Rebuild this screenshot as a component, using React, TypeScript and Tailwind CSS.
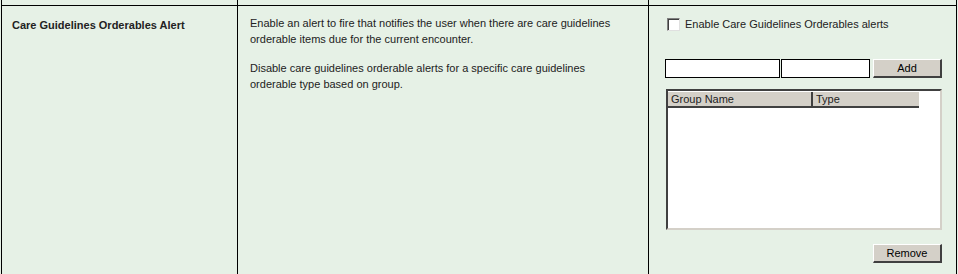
import React from "react";

const font = { fontFamily: '"Liberation Sans", Arial, sans-serif' };

function Btn({ label }: { label: string }) {
  return (
    <div className="w-[69px] h-[19px] bg-[#d4d0c8] border-t border-l border-t-white border-l-white border-r-2 border-b-2 border-r-[#404040] border-b-[#404040] flex items-center justify-center text-[11px] text-black leading-none">
      {label}
    </div>
  );
}

export default function App() {
  return (
    <div className="w-[958px] h-[274px] bg-[#e6f1e6] text-[#111]" style={font}>
      <div className="ml-[1px] w-[956px] border-l border-r border-black">
        <div className="flex h-[5px]">
          <div className="w-[236px] border-r border-black" />
          <div className="w-[411px] border-r border-black" />
          <div className="flex-1" />
        </div>
        <div className="flex h-[269px] border-t border-black">
          <div className="w-[236px] border-r border-black pl-[10px] pt-[12px]">
            <div className="text-[11px] font-bold leading-[14px] text-[#222]">Care Guidelines Orderables Alert</div>
          </div>
          <div className="w-[411px] border-r border-black pl-[12px] pt-[9px] text-[11px] leading-[16px] text-[#222]">
            <p>Enable an alert to fire that notifies the user when there are care guidelines orderable items due for the current encounter.</p>
            <p className="mt-[13px] pr-[40px]">Disable care guidelines orderable alerts for a specific care guidelines orderable type based on group.</p>
          </div>
          <div className="flex-1 pl-[16px] pt-[11px]">
            <div className="flex items-center h-[14px] ml-[2px]">
              <div className="w-[13px] h-[13px] bg-white border-t border-l border-t-[#808080] border-l-[#808080] border-r border-b border-r-[#e0e0e0] border-b-[#e0e0e0] shadow-[inset_1px_1px_0_#404040]" />
              <span className="ml-[5px] text-[11px] text-[#222]">Enable Care Guidelines Orderables alerts</span>
            </div>
            <div className="flex mt-[28px] items-start">
              <div className="w-[115px] h-[19px] bg-white border border-black" />
              <div className="ml-[1px] w-[89px] h-[19px] bg-white border border-black" />
              <div className="ml-[3px]">
                <Btn label="Add" />
              </div>
            </div>
            <div className="mt-[11px] ml-[1px] w-[276px] h-[141px] bg-white border-t-2 border-l-2 border-t-[#404040] border-l-[#404040] border-r-2 border-b-2 border-r-[#d4d0c8] border-b-[#d4d0c8] pt-[1px]">
              <div className="flex h-[16px] text-[11px] leading-[14px] text-[#222]">
                <div className="w-[145px] bg-[#d4d0c8] border-r-2 border-b-2 border-r-[#404040] border-b-[#404040] pl-[3px]">Group Name</div>
                <div className="w-[106px] bg-[#d4d0c8] border-b-2 border-b-[#404040] pl-[3px]">Type</div>
              </div>
            </div>
            <div className="flex justify-end w-[276px] mt-[14px] ml-[1px]">
              <Btn label="Remove" />
            </div>
          </div>
        </div>
      </div>
    </div>
  );
}
